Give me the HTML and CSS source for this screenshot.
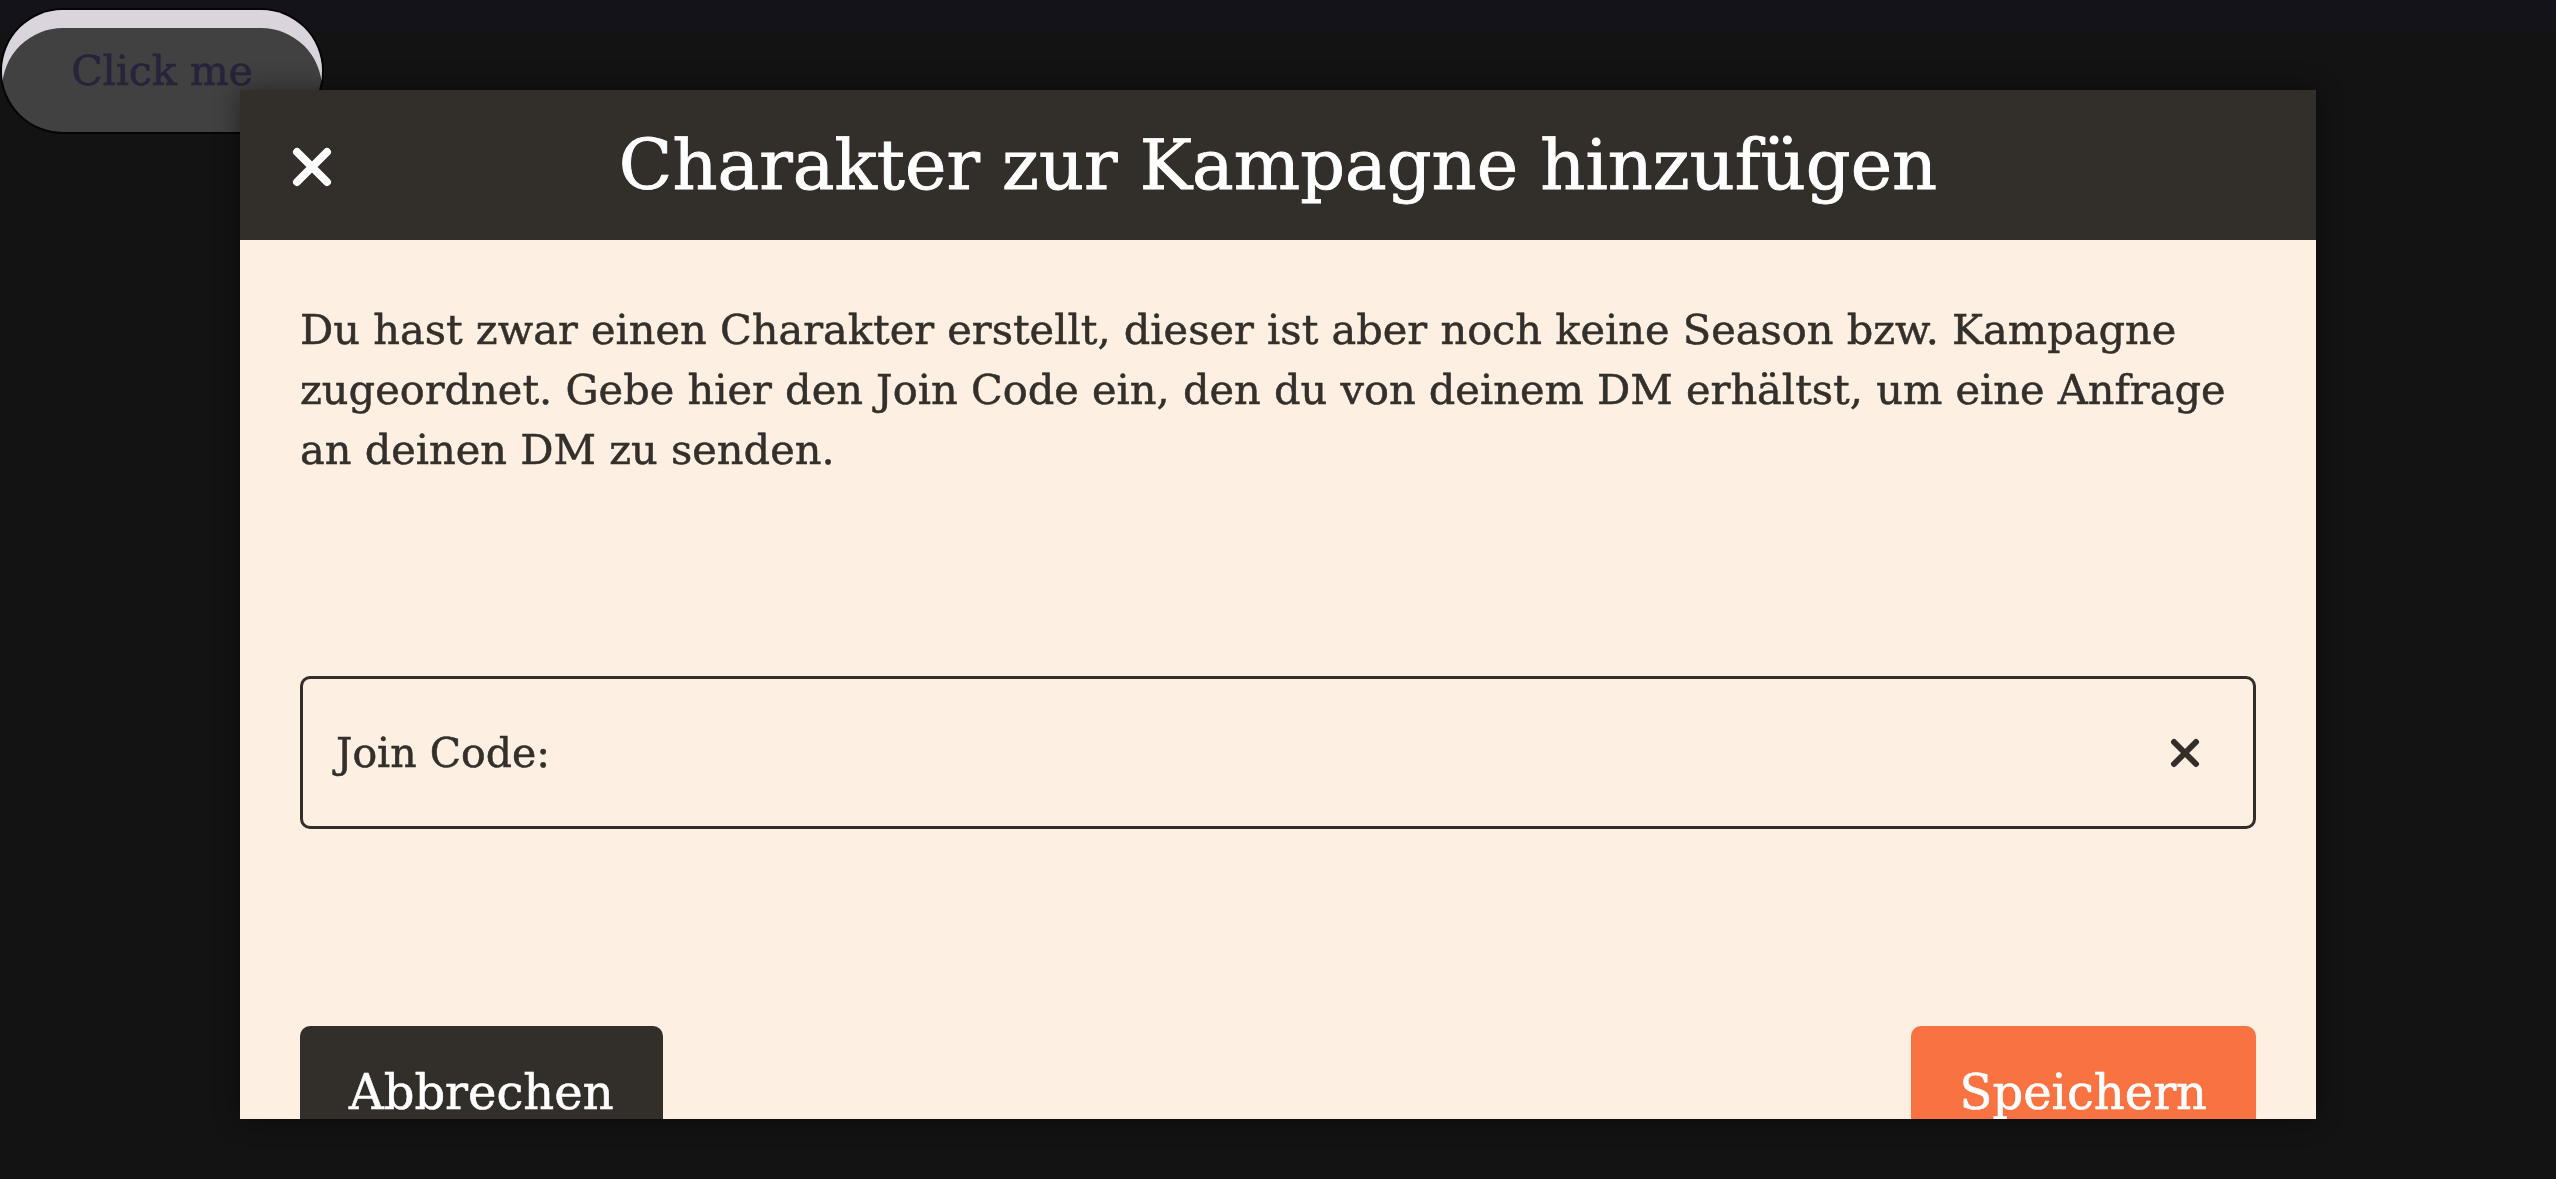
FILE: index.html
```html
<!DOCTYPE html>
<html lang="de">
<head>
<meta charset="utf-8">
<title>Charakter zur Kampagne hinzufügen</title>
<link rel="stylesheet" href="styles.css">
</head>
<body>
<button class="trigger" type="button">Click me</button>

<div class="modal" role="dialog" aria-labelledby="modal-title">
  <header class="modal-header">
    <button class="header-close" type="button" aria-label="Schließen">
      <svg class="icon-x-lg" viewBox="0 0 40 40" aria-hidden="true">
        <path d="M5 5L35 35M35 5L5 35"/>
      </svg>
    </button>
    <h1 id="modal-title" class="modal-title">Charakter zur Kampagne hinzufügen</h1>
    <span class="header-spacer"></span>
  </header>
  <div class="modal-body">
    <p class="intro">Du hast zwar einen Charakter erstellt, dieser ist aber noch keine Season bzw. Kampagne zugeordnet. Gebe hier den Join Code ein, den du von deinem DM erhältst, um eine Anfrage an deinen DM zu senden.</p>
    <label class="field">
      <span class="field-label">Join Code:</span>
      <span class="field-clear" aria-label="Leeren">
        <svg class="icon-x-sm" viewBox="0 0 30 30" aria-hidden="true">
          <path d="M4 4L26 26M26 4L4 26"/>
        </svg>
      </span>
    </label>
    <div class="actions">
      <button class="btn btn-dark" type="button">Abbrechen</button>
      <button class="btn btn-orange" type="button">Speichern</button>
    </div>
  </div>
</div>
</body>
</html>
```
FILE: styles.css
```css
html, body {
  margin: 0;
  padding: 0;
}

body {
  width: 100vw;
  height: 100vh;
  overflow: hidden;
  background: linear-gradient(#14131a 0, #14131a 30px, #131313 30px);
  font-family: "DejaVu Serif", "Liberation Serif", serif;
}

.trigger {
  display: block;
  margin: 10px 0 0 2px;
  width: 320px;
  height: 122px;
  border: none;
  border-radius: 61px;
  background: #414141;
  box-shadow: inset 0 18px 0 0 #dad5dd, 0 0 0 2px #050505;
  color: #27233a;
  font-family: "DejaVu Serif", "Liberation Serif", serif;
  font-size: 41px;
  -webkit-text-stroke: 0.6px #27233a;
  padding: 0;
}

.modal {
  position: fixed;
  top: 90px;
  left: 240px;
  width: 2076px;
  height: 1029px;
  overflow: hidden;
  display: flex;
  flex-direction: column;
  background: #fdefe2;
  box-shadow: 0 0 24px rgba(0, 0, 0, 0.45);
}

.modal-header {
  flex: 0 0 150px;
  display: grid;
  grid-template-columns: 1fr auto 1fr;
  align-items: center;
  background: #322e29;
}

.header-close {
  justify-self: start;
  margin-left: 52px;
  margin-top: 4px;
  padding: 0;
  border: none;
  background: none;
  width: 40px;
  height: 40px;
  display: flex;
}

.icon-x-lg {
  width: 40px;
  height: 40px;
  fill: none;
  stroke: #ffffff;
  stroke-width: 8;
  stroke-linecap: round;
}

.modal-title {
  margin: 0;
  color: #ffffff;
  font-weight: 400;
  font-size: 70px;
  line-height: 1;
  white-space: nowrap;
  -webkit-text-stroke: 0.9px #ffffff;
}

.modal-body {
  flex: 1;
  display: flex;
  flex-direction: column;
  gap: 196px;
  padding: 60px;
  color: #332f2a;
}

.intro {
  margin: 0;
  font-size: 41.5px;
  line-height: 60px;
  -webkit-text-stroke: 0.5px #332f2a;
}

.field {
  box-sizing: border-box;
  height: 153px;
  display: flex;
  align-items: center;
  justify-content: space-between;
  padding: 0 53px 0 33px;
  border: 3px solid #332e29;
  border-radius: 10px;
  font-size: 41px;
  color: #332f2a;
  -webkit-text-stroke: 0.5px #332f2a;
}

.field-clear {
  display: flex;
  width: 30px;
  height: 30px;
}

.icon-x-sm {
  width: 30px;
  height: 30px;
  fill: none;
  stroke: #332e29;
  stroke-width: 6;
  stroke-linecap: round;
}

.actions {
  display: flex;
  justify-content: space-between;
  margin-top: 1px;
}

.btn {
  border: none;
  border-radius: 10px;
  padding: 30px 49px;
  font-family: "DejaVu Serif", "Liberation Serif", serif;
  font-size: 48px;
  line-height: 72px;
  color: #ffffff;
  -webkit-text-stroke: 0.6px #ffffff;
}

.btn-dark {
  background: #322e29;
}

.btn-orange {
  background: #f97342;
}
```
